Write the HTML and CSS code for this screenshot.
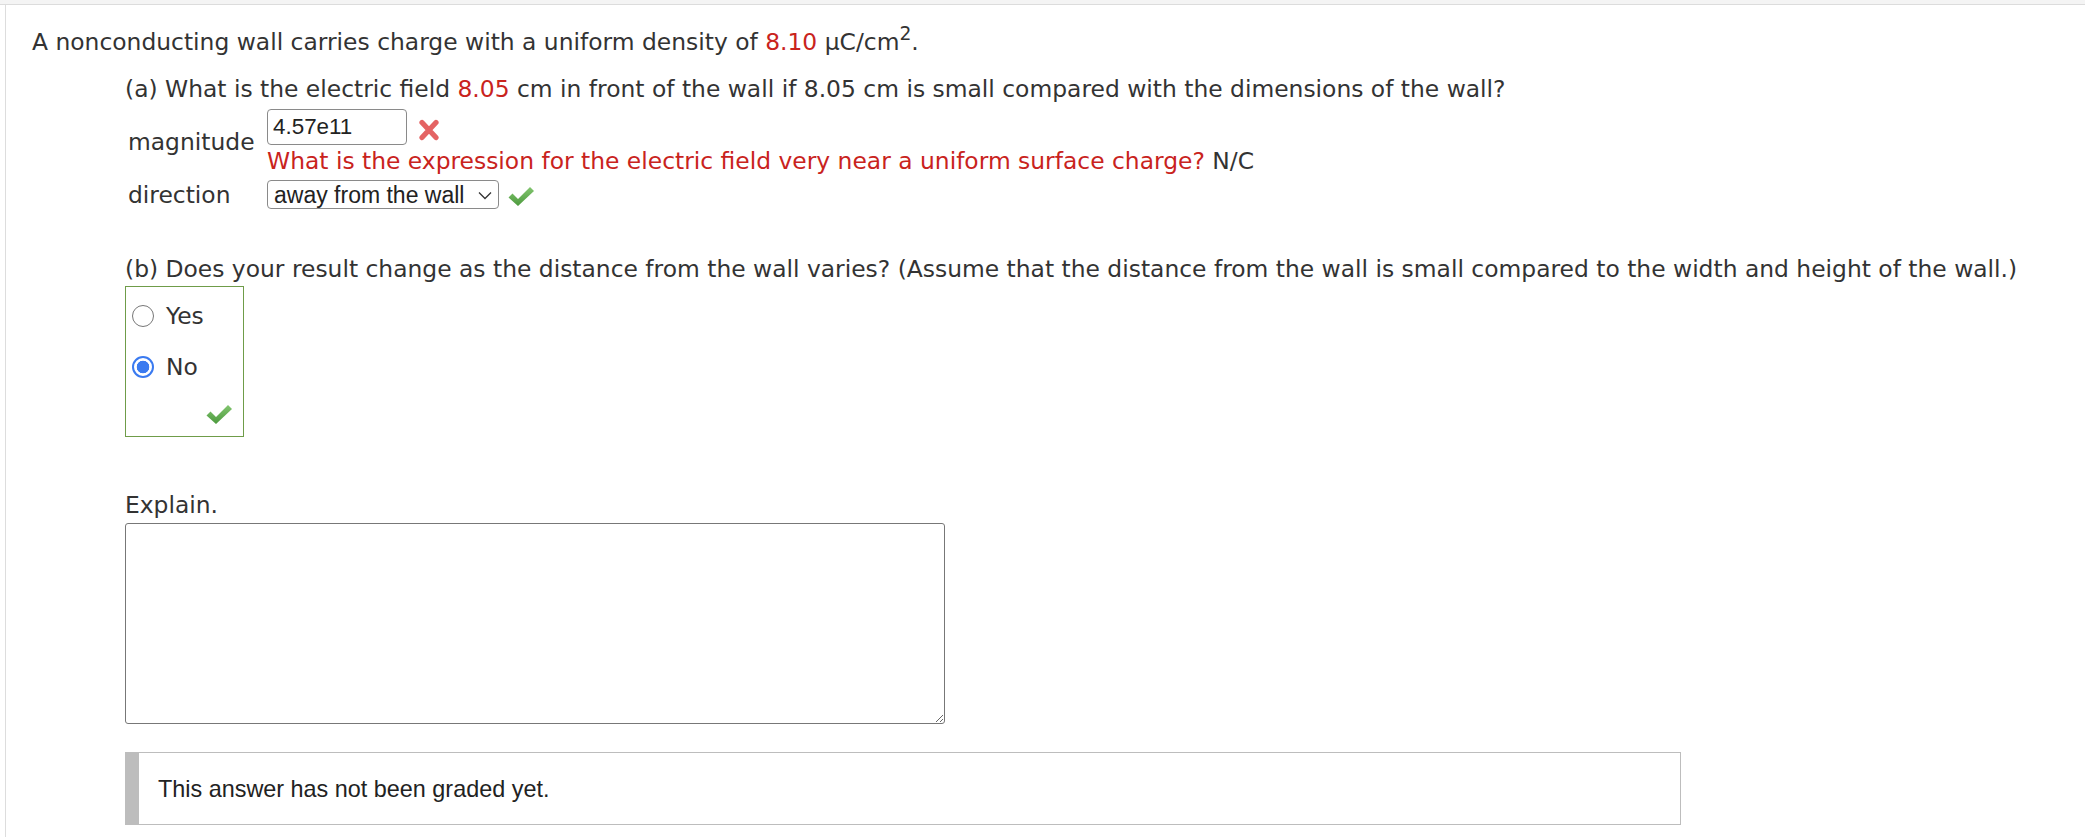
FILE: index.html
```html
<!DOCTYPE html>
<html lang="en">
<head>
<meta charset="utf-8">
<title>Question</title>
<link rel="stylesheet" href="styles.css">
</head>
<body>
<div class="topstrip"></div>
<div class="page">
  <p class="stem">A nonconducting wall carries charge with a uniform density of <span class="red">8.10</span> µC/cm<sup>2</sup>.</p>
  <div class="part">
    <p class="q">(a) What is the electric field <span class="red">8.05</span> cm in front of the wall if 8.05 cm is small compared with the dimensions of the wall?</p>
    <div class="answers">
      <div class="lbl">magnitude</div>
      <div class="cell">
        <div class="inrow">
          <input class="num" type="text" value="4.57e11">
          <svg class="xmark" width="24" height="22" viewBox="0 0 24 22"><path d="M5 3.5 L19 18.5 M19 3.5 L5 18.5" stroke="#e46363" stroke-width="5.2" stroke-linecap="round"/></svg>
        </div>
        <div class="feedback"><span class="red">What is the expression for the electric field very near a uniform surface charge?</span> N/C</div>
      </div>
      <div class="lbl">direction</div>
      <div class="cell">
        <div class="inrow">
          <span class="select">away from the wall<svg class="chev" width="14" height="9" viewBox="0 0 14 9"><path d="M1 1.5 L7 7.5 L13 1.5" fill="none" stroke="#333" stroke-width="1.3"/></svg></span>
          <svg class="check" width="28" height="22" viewBox="0 0 28 22"><defs><linearGradient id="g1" x1="0" y1="0" x2="0" y2="1"><stop offset="0" stop-color="#82c56f"/><stop offset="1" stop-color="#4d9a3e"/></linearGradient></defs><path d="M1.5 12.5 L5.5 8.5 L11 14 L23 2 L27 6 L11 21 Z" fill="url(#g1)"/></svg>
        </div>
      </div>
    </div>
    <p class="q qb">(b) Does your result change as the distance from the wall varies? (Assume that the distance from the wall is small compared to the width and height of the wall.)</p>
    <div class="choicebox">
      <div class="choice"><span class="radio"></span><span>Yes</span></div>
      <div class="choice"><span class="radio on"></span><span>No</span></div>
      <div class="checkrow"><svg class="check" width="28" height="22" viewBox="0 0 28 22"><defs><linearGradient id="g2" x1="0" y1="0" x2="0" y2="1"><stop offset="0" stop-color="#82c56f"/><stop offset="1" stop-color="#4d9a3e"/></linearGradient></defs><path d="M1.5 12.5 L5.5 8.5 L11 14 L23 2 L27 6 L11 21 Z" fill="url(#g2)"/></svg></div>
    </div>
    <p class="explain">Explain.</p>
    <textarea class="ta"></textarea>
    <div class="graded">This answer has not been graded yet.</div>
  </div>
</div>
</body>
</html>
```

FILE: styles.css
```css
html, body {
  margin: 0;
  padding: 0;
  background: #fff;
}
body {
  font-family: "DejaVu Sans", Verdana, sans-serif;
  font-size: 23.4px;
  line-height: 28px;
  color: #333;
}
.topstrip {
  height: 4px;
  background: #f4f4f4;
  border-bottom: 1px solid #dcdcdc;
}
.page {
  margin-left: 5px;
  border-left: 1px solid #dddddd;
  padding: 23px 0 40px 26px;
}
p { margin: 0; }
.red { color: #c9231d; }
sup {
  font-size: 0.8em;
  line-height: 0;
  vertical-align: 0.55em;
}
.part {
  margin-left: 93px;
}
.q { margin-top: 19px; white-space: nowrap; }
.answers {
  margin-top: 6px;
  display: grid;
  grid-template-columns: 142px auto;
  row-gap: 5px;
  align-items: center;
}
.lbl { padding-left: 3px; }
.cell { display: flex; flex-direction: column; align-items: flex-start; }
.inrow { display: flex; align-items: center; gap: 10px; }
.num {
  box-sizing: border-box;
  width: 140px;
  height: 36px;
  margin: 0;
  padding: 0 5px;
  border: 1px solid #8a8a8a;
  border-radius: 4px;
  font-family: "Liberation Sans", Arial, sans-serif;
  font-size: 22.4px;
  color: #222;
  background: #fff;
  outline: none;
}
.xmark { margin-left: 0; margin-top: 6px; }
.feedback { margin-top: 2px; white-space: nowrap; }
.select {
  box-sizing: border-box;
  height: 29px;
  width: 232px;
  display: inline-flex;
  align-items: center;
  justify-content: space-between;
  padding: 0 6px 0 6px;
  border: 1px solid #8a8a8a;
  border-radius: 4px;
  font-family: "Liberation Sans", Arial, sans-serif;
  font-size: 23px;
  color: #222;
}
.chev { margin-top: 1px; }
.inrow .check { margin-left: -2px; margin-top: 2px; }
.qb { margin-top: 46px; }
.choicebox {
  margin-top: 3px;
  width: 119px;
  box-sizing: border-box;
  border: 1px solid #6f9c49;
  padding: 15px 10px 11px 6px;
  display: flex;
  flex-direction: column;
}
.choice {
  display: flex;
  align-items: center;
  gap: 12px;
  height: 28px;
}
.choice + .choice { margin-top: 23px; }
.radio {
  box-sizing: border-box;
  width: 22px;
  height: 22px;
  border-radius: 50%;
  border: 1.5px solid #777;
  background: #fff;
}
.radio.on {
  border: 2px solid #3a7af0;
  background: radial-gradient(circle, #3a7af0 0 6px, #fff 6.6px);
}
.checkrow {
  margin-top: 22px;
  display: flex;
  justify-content: flex-end;
}
.explain { margin-top: 54px; }
.ta {
  display: block;
  box-sizing: border-box;
  margin-top: 4px;
  width: 820px;
  height: 201px;
  border: 1px solid #777;
  border-radius: 3px;
  padding: 4px;
  resize: both;
  font-family: "DejaVu Sans", sans-serif;
  font-size: 20px;
}
.graded {
  margin-top: 28px;
  box-sizing: border-box;
  width: 1556px;
  height: 73px;
  border: 1px solid #bdbdbd;
  border-left: 14px solid #bdbdbd;
  padding-left: 19px;
  display: flex;
  align-items: center;
  font-family: "Liberation Sans", Arial, sans-serif;
  font-size: 23.4px;
  color: #222;
}
```
